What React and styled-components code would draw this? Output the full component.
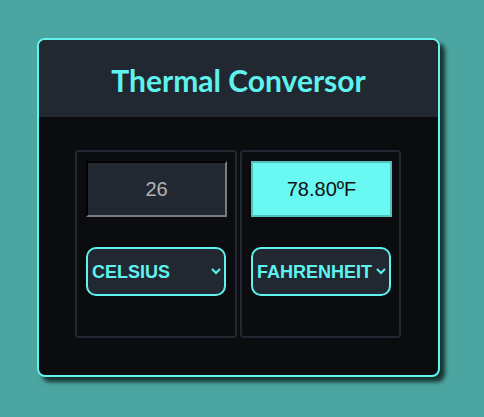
import styled, { createGlobalStyle } from "styled-components";

const GlobalStyle = createGlobalStyle`
  html, body {
    margin: 0;
    padding: 0;
    background-color: #4ba6a1;
    font-family: "Liberation Sans", Arial, sans-serif;
  }
`;

const Page = styled.main`
  width: 484px;
  height: 417px;
  padding-top: 38px;
  padding-left: 37px;
  box-sizing: border-box;
`;

const Card = styled.section`
  width: 403px;
  height: 339px;
  box-sizing: border-box;
  border: 2px solid #62f3ee;
  border-radius: 8px;
  background-color: #0a0c0f;
  overflow: hidden;
  box-shadow: 5px 5px 4px rgba(0, 0, 0, 0.7);
  display: flex;
  flex-direction: column;
`;

const Header = styled.header`
  height: 77px;
  background-color: #222831;
  display: flex;
  align-items: center;
  justify-content: center;
`;

const Title = styled.h1`
  margin: 0;
  font-family: Lato, "Liberation Sans", sans-serif;
  font-weight: 700;
  font-size: 30px;
  color: #5ef3ee;
  padding-top: 3px;
`;

const Body = styled.div`
  flex: 1;
  display: flex;
  gap: 3px;
  padding-top: 33px;
  padding-left: 36px;
`;

const Panel = styled.div`
  width: ${(p) => p.$width}px;
  height: 188px;
  box-sizing: border-box;
  border: 2px solid #222831;
  border-radius: 4px;
  padding: 9px 0 0 9px;
  display: flex;
  flex-direction: column;
  gap: 30px;
`;

const Field = styled.input`
  width: 141px;
  height: 56px;
  box-sizing: border-box;
  margin: 0;
  padding: 0;
  text-align: center;
  font-family: "Liberation Sans", Arial, sans-serif;
  font-size: 20px;
  border-width: 2px;
  border-style: ${(p) => (p.$result ? "solid" : "inset")};
  border-color: ${(p) => (p.$result ? "#4fc2bd" : "#3a3f45 #7b7b7b #7b7b7b #3a3f45")};
  background-color: ${(p) => (p.$result ? "#6af8f2" : "#222831")};
  color: ${(p) => (p.$result ? "#111" : "#b3b3b3")};
  outline: none;
`;

const Unit = styled.select`
  width: 140px;
  height: 49px;
  box-sizing: border-box;
  margin: 0;
  padding: 0;
  border: 2px solid #5ef3ee;
  border-radius: 10px;
  background-color: #222831;
  color: #5ef3ee;
  font-family: "Liberation Sans", Arial, sans-serif;
  font-weight: 700;
  font-size: 18px;
  outline: none;
`;

const units = ["CELSIUS", "FAHRENHEIT", "KELVIN"];

export default function App() {
  return (
    <Page>
      <GlobalStyle />
      <Card>
        <Header>
          <Title>Thermal Conversor</Title>
        </Header>
        <Body>
          <Panel $width={162}>
            <Field type="text" defaultValue="26" />
            <Unit defaultValue="CELSIUS">
              {units.map((u) => (
                <option key={u}>{u}</option>
              ))}
            </Unit>
          </Panel>
          <Panel $width={161}>
            <Field $result type="text" readOnly value="78.80ºF" />
            <Unit defaultValue="FAHRENHEIT">
              {units.map((u) => (
                <option key={u}>{u}</option>
              ))}
            </Unit>
          </Panel>
        </Body>
      </Card>
    </Page>
  );
}
